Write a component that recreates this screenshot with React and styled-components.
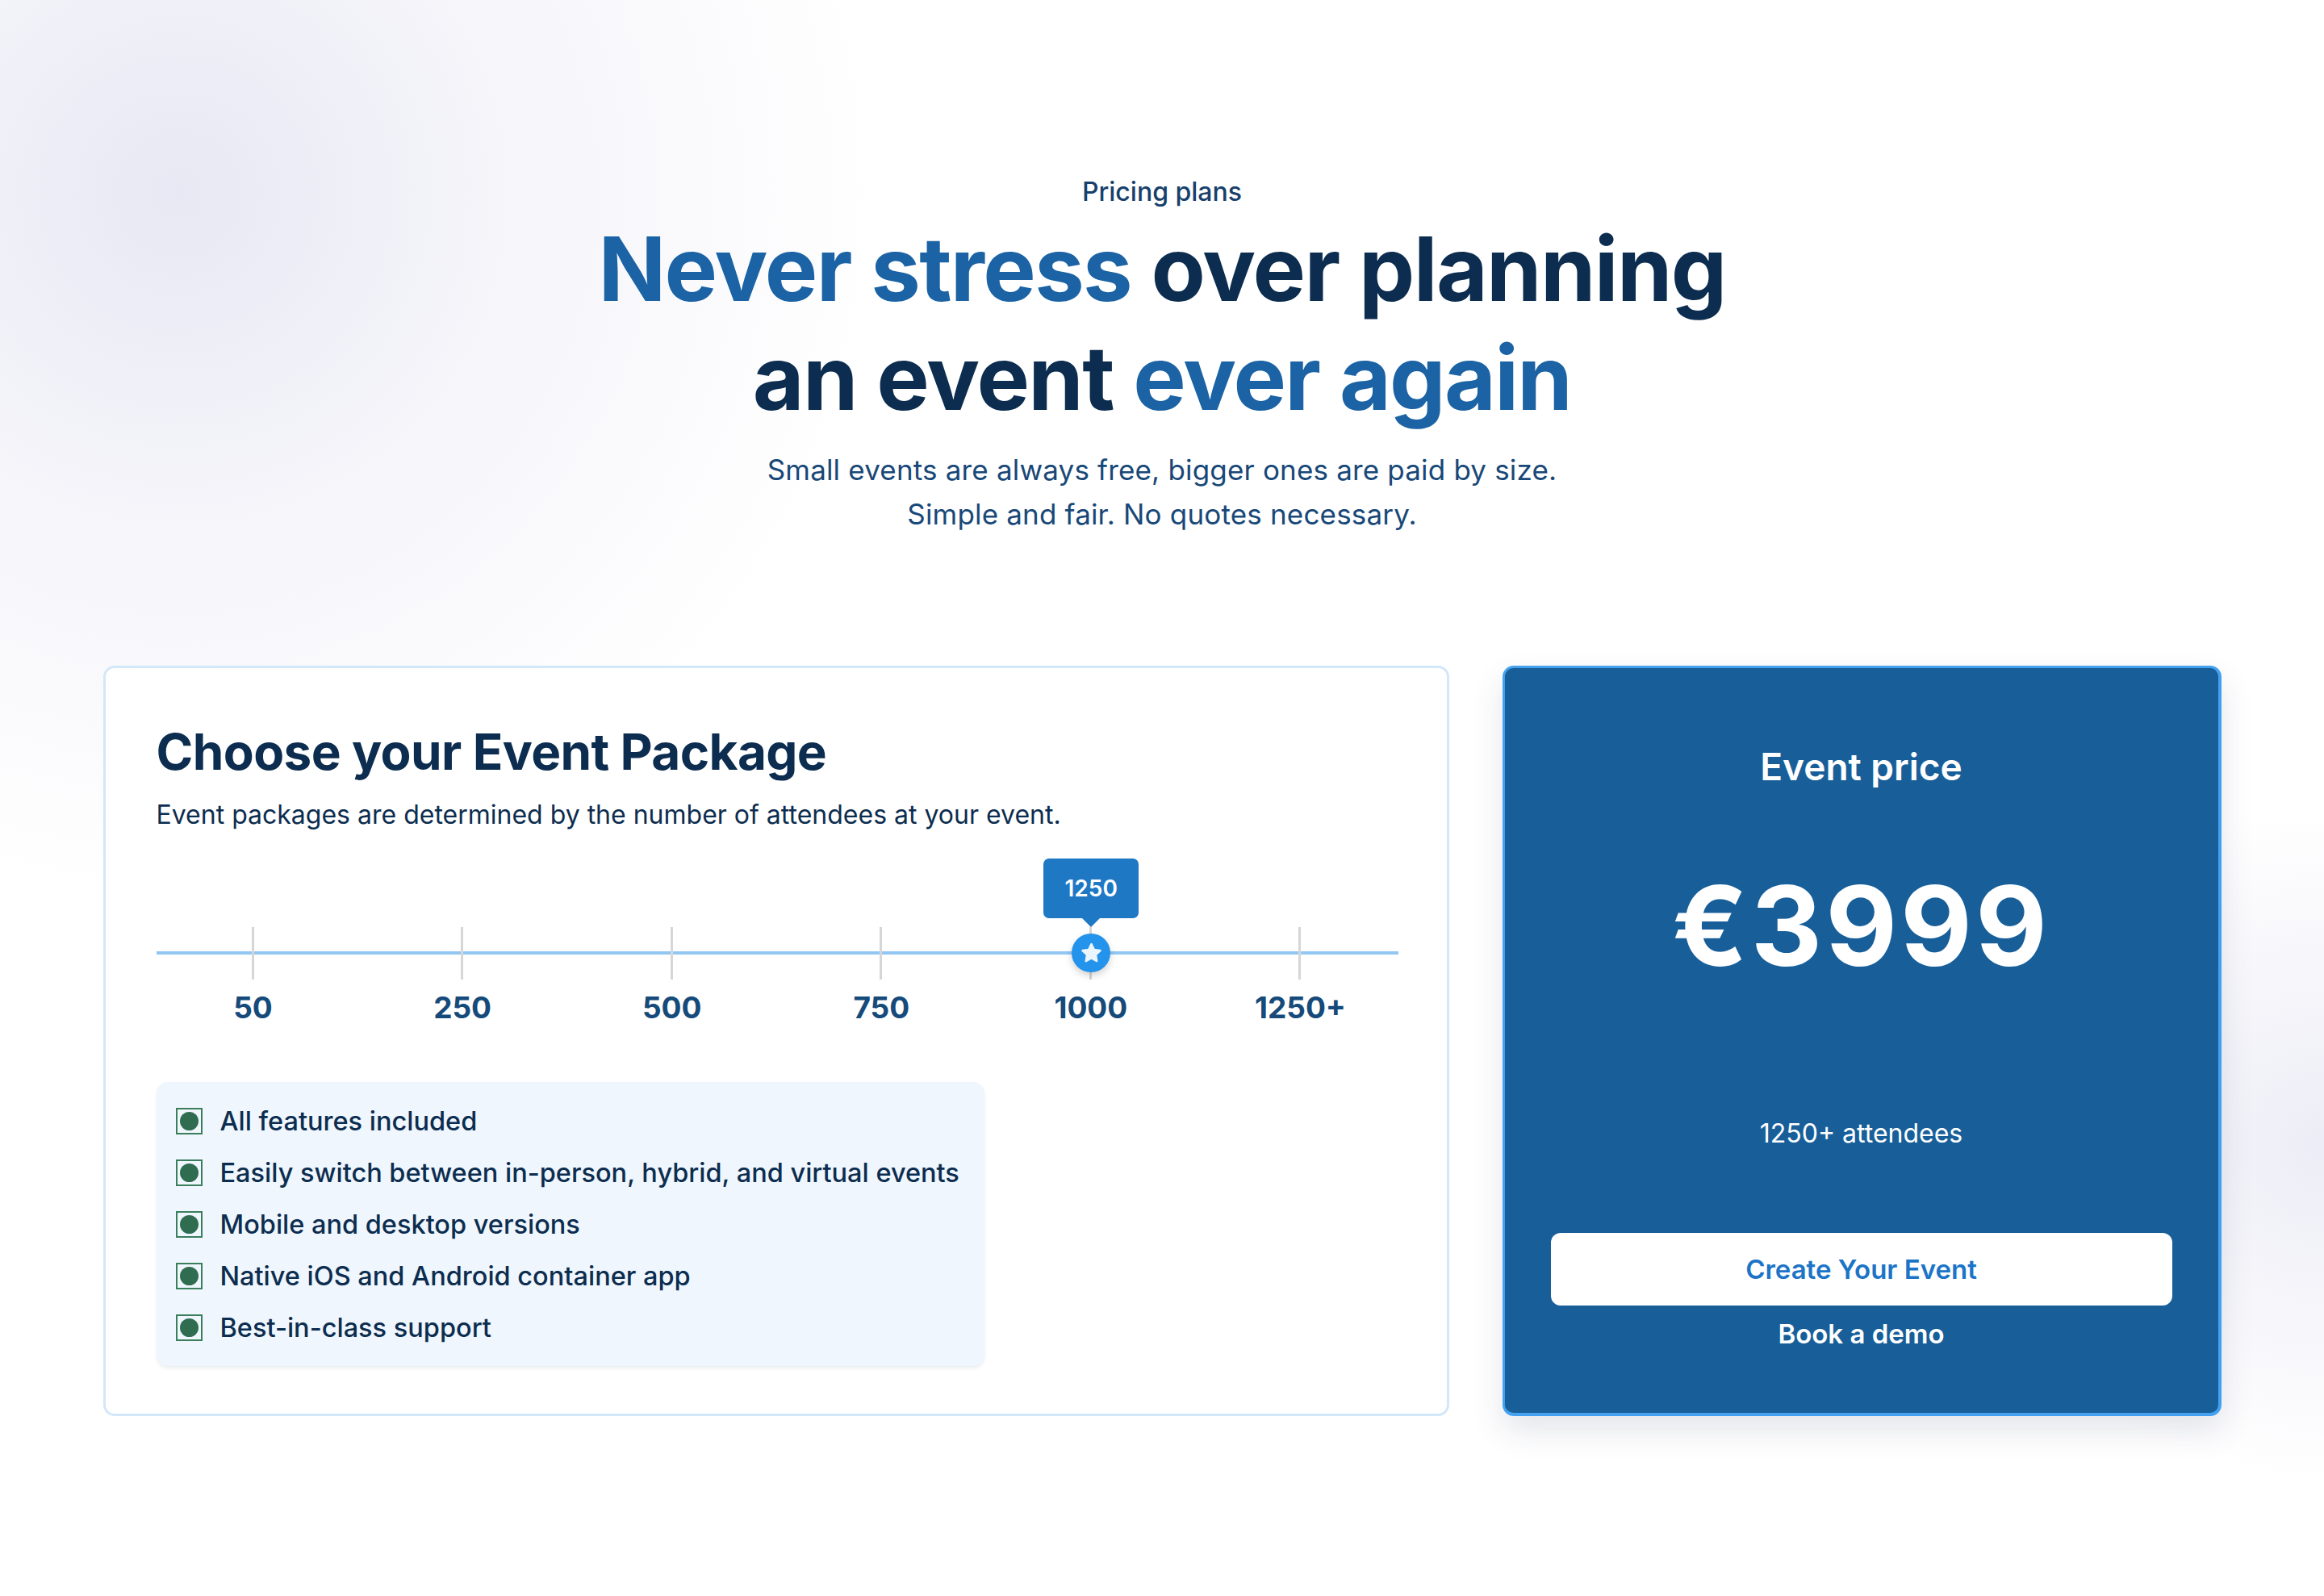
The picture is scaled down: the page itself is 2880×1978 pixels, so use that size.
import React from "react";
import styled, { createGlobalStyle } from "styled-components";

const GlobalStyle = createGlobalStyle`
  * { box-sizing: border-box; }
  html, body {
    margin: 0;
    padding: 0;
    background: #ffffff;
  }
  body {
    font-family: Inter, "Noto Sans", "Liberation Sans", sans-serif;
    color: #0c2d4f;
  }
`;

const Page = styled.div`
  min-height: 1978px;
  padding: 219px 0 120px;
  background:
    radial-gradient(circle at 220px 240px, rgba(228, 228, 242, 0.85) 0, rgba(236, 236, 246, 0.5) 420px, rgba(255, 255, 255, 0) 880px),
    radial-gradient(circle at 2880px 1420px, rgba(232, 232, 244, 0.8) 0, rgba(255, 255, 255, 0) 420px),
    #ffffff;
`;

const Hero = styled.header`
  display: flex;
  flex-direction: column;
  align-items: center;
  text-align: center;
`;

const Eyebrow = styled.p`
  margin: 0;
  font-size: 32px;
  line-height: 38px;
  font-weight: 500;
  color: #17406b;
`;

const Headline = styled.h1`
  margin: 9px 0 0;
  font-size: 110px;
  line-height: 135px;
  font-weight: 700;
  letter-spacing: -0.015em;
  color: #0c2d4f;
`;

const Accent = styled.span`
  color: #1b63a4;
`;

const Lead = styled.p`
  margin: 19px 0 0;
  font-size: 35px;
  line-height: 55px;
  font-weight: 400;
  letter-spacing: 0.005em;
  color: #184878;
`;

const Cards = styled.section`
  width: 2625px;
  margin: 160px auto 0;
  display: grid;
  grid-template-columns: 1668px 891px;
  column-gap: 66px;
`;

const PackageCard = styled.div`
  background: #ffffff;
  border: 3px solid #d3e7fa;
  border-radius: 14px;
  padding: 67px 60px 59px 63px;
  display: flex;
  flex-direction: column;
  align-items: flex-start;
`;

const CardTitle = styled.h2`
  margin: 0;
  font-size: 62px;
  line-height: 74px;
  font-weight: 700;
  letter-spacing: -0.01em;
  color: #0c2d4f;
`;

const CardText = styled.p`
  margin: 19px 0 0;
  font-size: 32px;
  line-height: 44px;
  color: #0c2d4f;
`;

const Slider = styled.div`
  position: relative;
  align-self: stretch;
  height: 160px;
  margin-top: 30px;
`;

const Track = styled.div`
  position: absolute;
  left: 0;
  right: 0;
  top: 117px;
  height: 4px;
  background: #92c6f3;
`;

const TickRow = styled.div`
  position: absolute;
  left: 118px;
  right: 120px;
  top: 87px;
  height: 65px;
  display: flex;
  justify-content: space-between;
`;

const Tick = styled.span`
  width: 3px;
  height: 65px;
  background: #d6d6d6;
`;

const Thumb = styled.div`
  position: absolute;
  left: ${(p) => p.$at}px;
  top: 95px;
  width: 48px;
  height: 48px;
  margin-left: -24px;
  border-radius: 50%;
  background: #2393eb;
  box-shadow: 0 4px 10px rgba(0, 0, 0, 0.18);
  display: flex;
  align-items: center;
  justify-content: center;
`;

const Bubble = styled.div`
  position: absolute;
  left: ${(p) => p.$at}px;
  top: 2px;
  width: 118px;
  height: 74px;
  margin-left: -59px;
  border-radius: 7px;
  background: #1e78c4;
  color: #ffffff;
  font-size: 28px;
  font-weight: 600;
  display: flex;
  align-items: center;
  justify-content: center;

  &::after {
    content: "";
    position: absolute;
    left: 50%;
    bottom: -11px;
    margin-left: -12px;
    border-left: 12px solid transparent;
    border-right: 12px solid transparent;
    border-top: 12px solid #1e78c4;
  }
`;

const Labels = styled.div`
  align-self: stretch;
  display: flex;
  justify-content: space-between;
  padding: 0 121px 0 120px;
  margin-top: 5px;
`;

const Label = styled.span`
  width: 0;
  display: flex;
  justify-content: center;
  white-space: nowrap;
  font-size: 37px;
  line-height: 44px;
  font-weight: 700;
  color: #154a7a;
`;

const Features = styled.ul`
  list-style: none;
  margin: 70px 0 0;
  padding: 16px 31px 16px 24px;
  background: #eff6fd;
  border-radius: 14px;
  box-shadow: 0 3px 4px rgba(12, 45, 79, 0.08);
`;

const Feature = styled.li`
  display: flex;
  align-items: center;
  gap: 22px;
  height: 64px;
  font-size: 32.5px;
  font-weight: 500;
  color: #0c2d4f;
  white-space: nowrap;
`;

const Check = styled.span`
  width: 33px;
  height: 33px;
  flex: none;
  border: 2px solid #3b7e5c;
  display: flex;
  align-items: center;
  justify-content: center;

  &::before {
    content: "";
    width: 23px;
    height: 23px;
    border-radius: 50%;
    background: #2f6c50;
  }
`;

const PriceCard = styled.aside`
  background: #185f9a;
  border: 3px solid #43a1f0;
  border-right-width: 4px;
  border-bottom-width: 4px;
  border-radius: 14px;
  box-shadow: 0 18px 40px rgba(30, 40, 80, 0.12);
  padding: 95px 57px 76px 57px;
  display: flex;
  flex-direction: column;
  align-items: center;
  color: #ffffff;
`;

const PriceTitle = styled.h3`
  margin: 0;
  font-size: 46px;
  line-height: 55px;
  font-weight: 600;
`;

const Price = styled.div`
  margin-top: 102px;
  font-size: 137px;
  line-height: 135px;
  font-weight: 700;
  letter-spacing: 4px;
`;

const Attendees = styled.p`
  margin: 170px 0 0;
  font-size: 32px;
  line-height: 40px;
  font-weight: 400;
`;

const PrimaryButton = styled.button`
  margin-top: 103px;
  width: 100%;
  height: 90px;
  border: none;
  border-radius: 12px;
  background: #ffffff;
  color: #1c74c7;
  font-family: inherit;
  font-size: 33px;
  font-weight: 600;
  cursor: pointer;
`;

const DemoLink = styled.a`
  margin-top: 15px;
  font-size: 33px;
  line-height: 40px;
  font-weight: 600;
  color: #ffffff;
  text-decoration: none;
  cursor: pointer;
`;

const StarIcon = () => (
  <svg width="31" height="31" viewBox="0 0 24 24">
    <path
      d="M12 3.2l2.6 5.4 5.9.8-4.3 4.1 1 5.9L12 16.6l-5.2 2.8 1-5.9-4.3-4.1 5.9-.8z"
      fill="#eaf5fe"
      stroke="#eaf5fe"
      strokeWidth="2"
      strokeLinejoin="round"
    />
  </svg>
);

const steps = ["50", "250", "500", "750", "1000", "1250+"];
const features = [
  "All features included",
  "Easily switch between in-person, hybrid, and virtual events",
  "Mobile and desktop versions",
  "Native iOS and Android container app",
  "Best-in-class support",
];

// thumb sits on the "1000" tick
const TICK_START = 119.5;
const TICK_STEP = 259.8;
const selected = 4;

const App = () => {
  const at = TICK_START + TICK_STEP * selected;
  return (
    <Page>
      <GlobalStyle />
      <Hero>
        <Eyebrow>Pricing plans</Eyebrow>
        <Headline>
          <Accent>Never stress</Accent> over planning
          <br />
          an event <Accent>ever again</Accent>
        </Headline>
        <Lead>
          Small events are always free, bigger ones are paid by size.
          <br />
          Simple and fair. No quotes necessary.
        </Lead>
      </Hero>

      <Cards>
        <PackageCard>
          <CardTitle>Choose your Event Package</CardTitle>
          <CardText>Event packages are determined by the number of attendees at your event.</CardText>
          <Slider>
            <Track />
            <TickRow>
              {steps.map((s) => (
                <Tick key={s} />
              ))}
            </TickRow>
            <Bubble $at={at}>1250</Bubble>
            <Thumb $at={at}>
              <StarIcon />
            </Thumb>
          </Slider>
          <Labels>
            {steps.map((s) => (
              <Label key={s}>{s}</Label>
            ))}
          </Labels>
          <Features>
            {features.map((f) => (
              <Feature key={f}>
                <Check />
                {f}
              </Feature>
            ))}
          </Features>
        </PackageCard>

        <PriceCard>
          <PriceTitle>Event price</PriceTitle>
          <Price>€3999</Price>
          <Attendees>1250+ attendees</Attendees>
          <PrimaryButton>Create Your Event</PrimaryButton>
          <DemoLink>Book a demo</DemoLink>
        </PriceCard>
      </Cards>
    </Page>
  );
};

export default App;
